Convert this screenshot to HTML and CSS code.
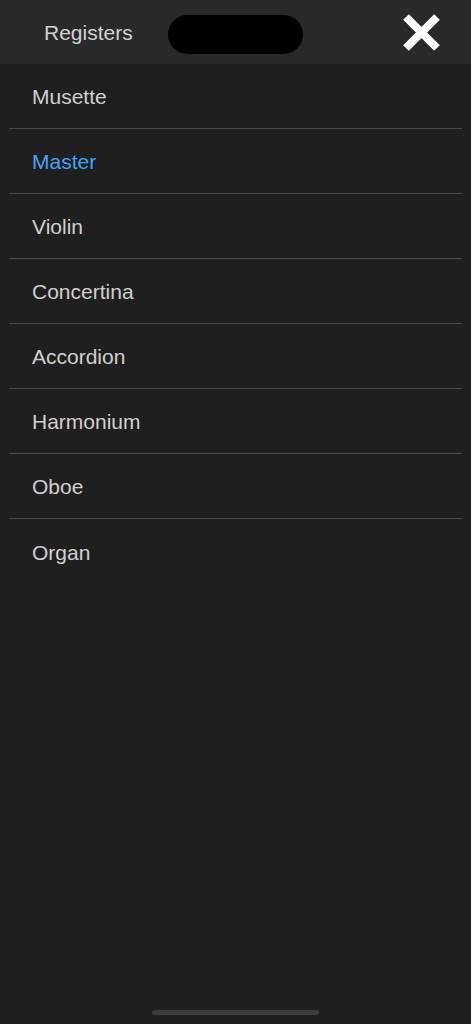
FILE: index.html
```html
<!DOCTYPE html>
<html lang="en">
<head>
<meta charset="utf-8">
<title>Registers</title>
<link rel="stylesheet" href="styles.css">
</head>
<body>
<div class="app">
  <header class="header">
    <span class="title">Registers</span>
    <span class="island"></span>
    <button class="close" aria-label="Close">
      <svg width="37" height="37" viewBox="0 0 37 37"><path d="M3 3L34 34M34 3L3 34" stroke="#fff" stroke-width="8" stroke-linecap="butt"/></svg>
    </button>
  </header>
  <ul class="list">
    <li class="item">Musette</li>
    <li class="item active">Master</li>
    <li class="item">Violin</li>
    <li class="item">Concertina</li>
    <li class="item">Accordion</li>
    <li class="item">Harmonium</li>
    <li class="item">Oboe</li>
    <li class="item">Organ</li>
  </ul>
  <div class="home-bar"></div>
</div>
</body>
</html>
```

FILE: styles.css
```css
html, body {
  margin: 0;
  padding: 0;
  background: #1f1f1f;
}
.app {
  width: 471px;
  height: 1024px;
  display: flex;
  flex-direction: column;
  background: #1f1f1f;
  font-family: "Liberation Sans", Arial, sans-serif;
  position: relative;
  overflow: hidden;
}
.header {
  height: 64px;
  background: #29292b;
  display: flex;
  align-items: center;
  flex-shrink: 0;
  position: relative;
}
.title {
  margin-left: 44px;
  font-size: 21px;
  color: #d2d2d2;
  padding-top: 2px;
}
.island {
  position: absolute;
  left: 168px;
  top: 15px;
  width: 135px;
  height: 39px;
  border-radius: 20px;
  background: #000;
}
.close {
  position: absolute;
  left: 403px;
  top: 14px;
  width: 37px;
  height: 37px;
  padding: 0;
  border: 0;
  background: none;
  display: block;
}
.close svg { display: block; }
.list {
  list-style: none;
  margin: 0 9px;
  padding: 0;
}
.item {
  height: 64px;
  box-sizing: border-box;
  padding-top: 2px;
  border-bottom: 1px solid #4a4a4a;
  display: flex;
  align-items: center;
  padding-left: 23px;
  font-size: 21px;
  color: #d0d0d0;
}
.item + .item {
  height: 65px;
}
.item:first-child {
  height: 65px;
}
.item:last-child {
  border-bottom: none;
}
.item.active {
  color: #42a3ef;
}
.home-bar {
  position: absolute;
  left: 152px;
  bottom: 9px;
  width: 167px;
  height: 5px;
  border-radius: 3px;
  background: #3c3c3c;
}
```
